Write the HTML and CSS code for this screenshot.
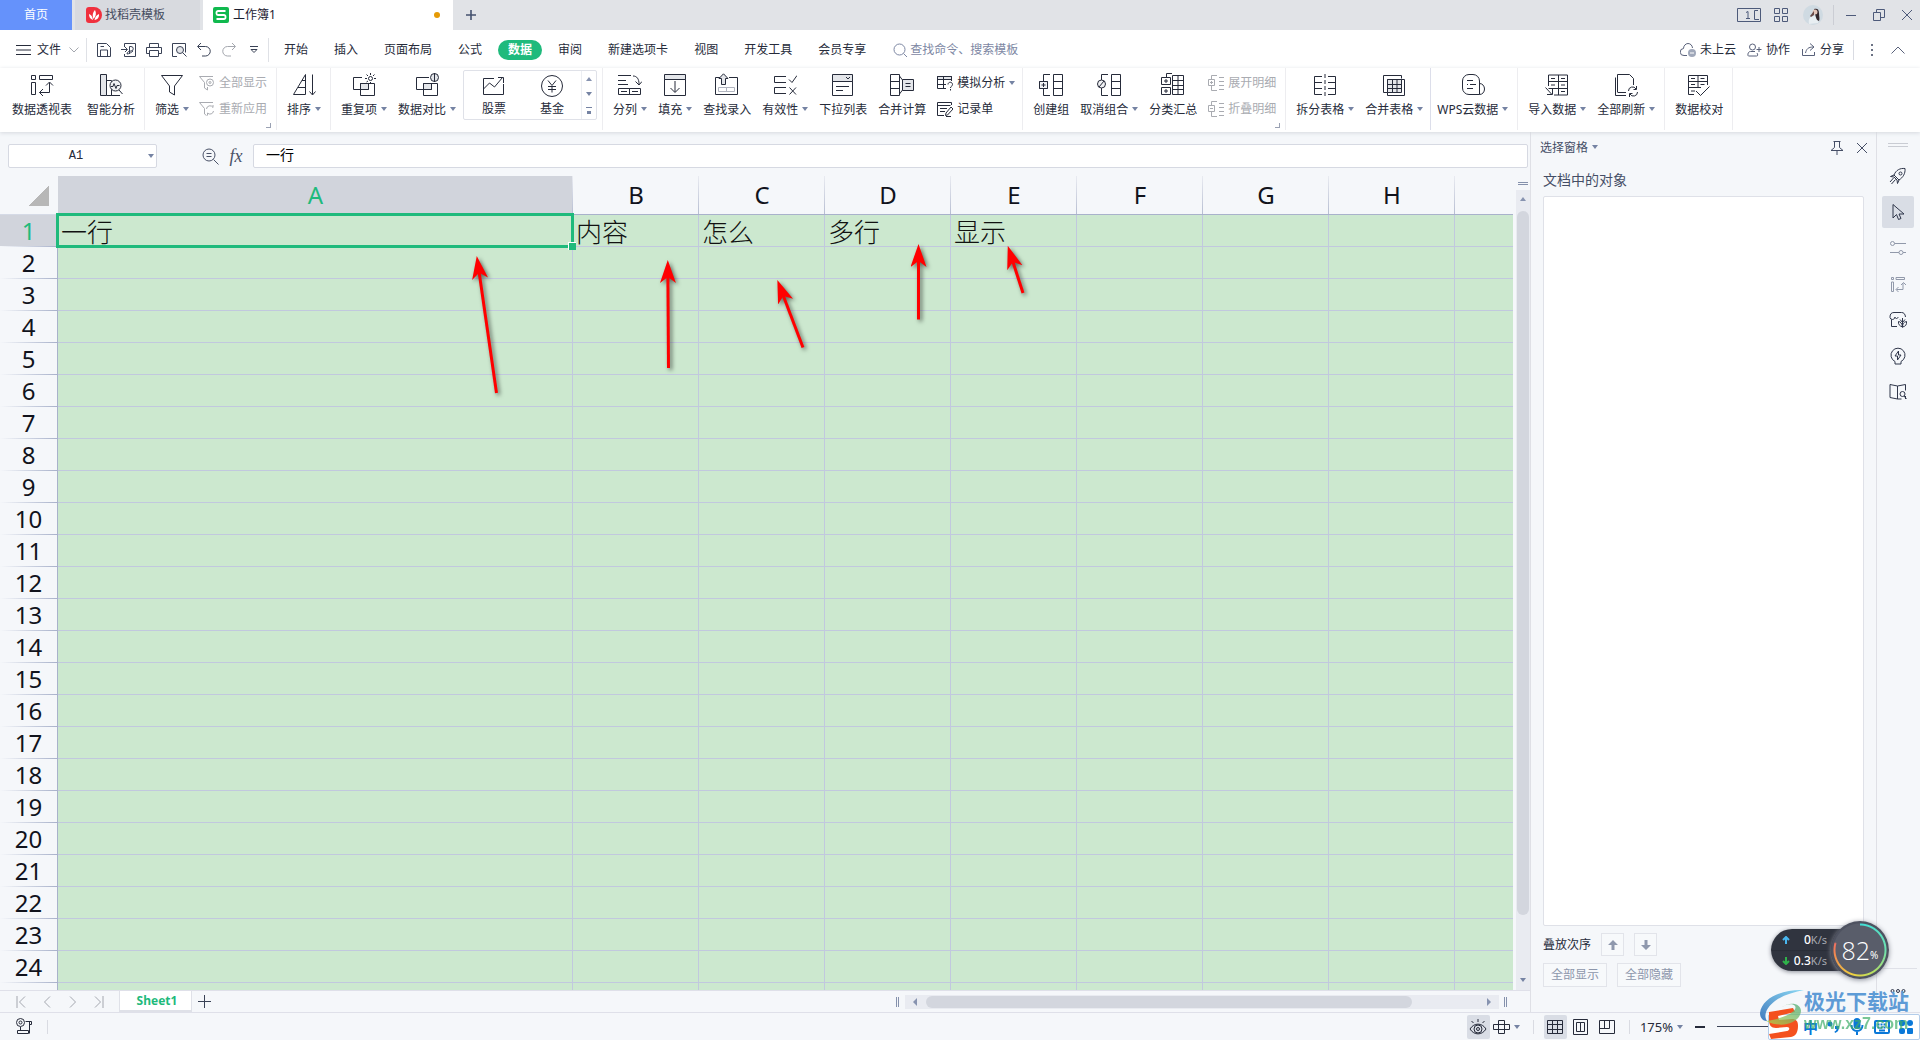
FILE: index.html
```html
<!DOCTYPE html>
<html lang="zh-CN">
<head>
<meta charset="utf-8">
<title>工作簿1</title>
<link rel="stylesheet" href="styles.css">
</head>
<body>
<header class="titlebar">
  <button class="tab tab-home">首页</button>
  <button class="tab tab-docer"><svg width="16" height="16" viewBox="0 0 16 16"><path d="M3 0h5a8 8 0 0 1 0 16H3a3 3 0 0 1-3-3V3a3 3 0 0 1 3-3z" fill="#f0303d"/><path d="M7 13C4 12 3 10 3 7c2 .6 3.400 2 4 6zM7.500 12C6 8 7 5 9 3c1.500 3 1.300 6-1.500 9zM8.500 13c.5-3 2-5 4.500-6 .3 3-1 5.500-4.500 6z" fill="#fff"/></svg>找稻壳模板</button>
  <button class="tab tab-active"><svg width="16" height="16" viewBox="0 0 16 16"><rect width="16" height="16" rx="2" fill="#10b94e"/><path d="M12.500 4H5a1.500 1.500 0 0 0-1.500 1.500v1A1.500 1.500 0 0 0 5 8h6a1.500 1.500 0 0 1 1.500 1.500v1A1.500 1.500 0 0 1 11 12H3.500" stroke="#fff" stroke-width="1.800" fill="none"/></svg>工作簿1<span class="dirty"></span></button>
  <button class="plain new-tab" aria-label="新建"><svg class="ic" width="12" height="12" viewBox="0 0 12 12"><path d="M6 1v10M1 6h10" stroke-width="1.600"/></svg></button>
  <div class="window-tools">
    <svg class="ic" width="24" height="16" viewBox="0 0 24 16"><path d="M.5 1.500h23v13H.5zM21 3.500h-3.500v9H22M9 5.500l2-1v7M9 11.500h4M19.500 12.500h1"/></svg>
    <svg class="ic" width="14" height="16" viewBox="0 0 14 16"><path d="M.5 1.500h5v5h-5zM8.500 1.500h5v5h-5zM.5 9.500h5v5h-5zM8.500 9.500h5v5h-5z"/></svg>
    <svg width="20" height="20" viewBox="0 0 20 20"><circle cx="10" cy="10" r="10" fill="#cfdae2"/><path d="M6 19c-1-5 1-8 5-8s5 3 4 7z" fill="#e8eef2"/><path d="M11 4c3-1 5 0 5 4 0 3 1 6 0 8-3-1-3-4-4-7z" fill="#33262c"/><circle cx="12" cy="7" r="2.500" fill="#e3c4b8"/><path d="M7 11l4-5 0 4-3 2z" fill="#6a4a48"/></svg>
    <i class="vline"></i>
    <button class="plain" aria-label="最小化"><svg class="ic" width="12" height="14" viewBox="0 0 12 14"><path d="M1 7.500h10"/></svg></button>
    <button class="plain" aria-label="还原"><svg class="ic" width="14" height="14" viewBox="0 0 14 14"><path d="M1.500 4.500h7v8h-7zM4.500 4.500v-3h8v8h-4"/></svg></button>
    <button class="plain" aria-label="关闭"><svg class="ic" width="12" height="12" viewBox="0 0 12 12"><path d="M1 1l10 10M11 1L1 11"/></svg></button>
  </div>
</header>

<nav class="menubar">
  <button class="plain file"><svg class="ic" width="15" height="12" viewBox="0 0 15 12"><path d="M0 1.500h15M0 6h15M0 10.500h15"/></svg>文件<svg class="ic faint" width="10" height="8" viewBox="0 0 10 8"><path d="M.5 1.500L5 6l4.500-4.500"/></svg></button>
  <div class="quick">
    <button class="plain" aria-label="保存"><svg class="ic" width="16" height="16" viewBox="0 0 16 16"><path d="M1.500 1.500h9l4 4v9h-13zM4.500 14v-6h7v6M4.500 4.500H8"/></svg></button>
    <button class="plain" aria-label="输出为PDF"><svg class="ic" width="16" height="16" viewBox="0 0 16 16"><path d="M3.500 5V1.500h11v13h-11V12M0 7.500h6M4 5l2.500 2.500L4 10M8.500 12V4.500h1.500a2 2 0 0 1 0 4.500c-2 0-4 1-4 3 2 0 5-2 6-3"/></svg></button>
    <button class="plain" aria-label="打印"><svg class="ic" width="16" height="16" viewBox="0 0 16 16"><path d="M3.500 5.500v-4h9v4M3.500 11.500h-3v-6h15v6h-3M3.500 8.500h9v6h-9z"/></svg></button>
    <button class="plain" aria-label="打印预览"><svg class="ic" width="16" height="16" viewBox="0 0 16 16"><path d="M6 14.500H1.500v-13h13v9"/><circle cx="9" cy="8" r="3.500" fill="#e4e6ea"/><path d="M11.500 10.500l4 4"/></svg></button>
    <button class="plain" aria-label="撤销"><svg class="ic" width="16" height="16" viewBox="0 0 16 16"><path d="M5 1L1.500 4.500 5 8M2 4.500h7.500a4.500 4.500 0 0 1 0 9.500H6"/></svg></button>
    <button class="plain faint" aria-label="恢复"><svg class="ic" width="16" height="16" viewBox="0 0 16 16"><path d="M11 1l3.500 3.500L11 8M14 4.500H6.500a4.500 4.500 0 0 0 0 9.500H10"/></svg></button>
    <button class="plain more" aria-label="更多"><svg class="ic" width="8" height="8" viewBox="0 0 8 8"><path d="M0 .5h8M1 3.500l3 3 3-3z"/></svg></button>
  </div>
  <div class="menus">
    <button class="plain">开始</button><button class="plain">插入</button><button class="plain">页面布局</button><button class="plain">公式</button><button class="plain current">数据</button><button class="plain">审阅</button><button class="plain">新建选项卡</button><button class="plain">视图</button><button class="plain">开发工具</button><button class="plain">会员专享</button>
  </div>
  <button class="plain search"><svg class="ic" width="15" height="15" viewBox="0 0 15 15"><circle cx="6.500" cy="6.500" r="5.500"/><path d="M10.500 10.500L14 14"/></svg>查找命令、搜索模板</button>
  <div class="account">
    <button class="plain"><svg class="ic" width="16" height="16" viewBox="0 0 16 16"><path d="M7 13.500H4a3.500 3.500 0 0 1-.5-7C3.500 4 5.500 1.500 8 1.500s4.300 2 4.500 4.500"/><circle cx="12" cy="11" r="4" fill="#a0a8ba" stroke="none"/><path d="M10 11h4" stroke="#fff"/></svg>未上云</button>
    <button class="plain"><svg class="ic" width="15" height="16" viewBox="0 0 15 16"><circle cx="5.500" cy="5" r="3"/><path d="M8 9.500H3.500c-3 0-3 4.500-2 4.500h8c2 0 1-2 .5-3M9.500 7.500h5M12 5v5"/></svg>协作</button>
    <button class="plain"><svg class="ic" width="15" height="16" viewBox="0 0 15 16"><path d="M1.500 7v6.500h12V10M9 1.500L13 5 9 8.500M12.500 5C7 5 5.500 7 4.500 11"/></svg>分享</button>
    <i class="vline"></i>
    <button class="plain" aria-label="选项"><svg width="4" height="14" viewBox="0 0 4 14"><path d="M1 1h2v2H1zM1 6h2v2H1zM1 11h2v2H1z" fill="#6b7284"/></svg></button>
    <button class="plain" aria-label="折叠功能区"><svg class="ic faint2" width="14" height="8" viewBox="0 0 14 8"><path d="M.5 7.500L7 1l6.500 6.500"/></svg></button>
  </div>
</nav>

<section class="ribbon">
  <div class="group wide">
    <button class="tool"><svg class="ic" width="24" height="24" viewBox="0 0 24 24"><path d="M1.500 2.500h4v4h-4zM9.500 2.500h13v4h-13zM1.500 9.500h4v12h-4zM9.500 19.500h10v-10M13 16l-3.500 3.500L13 23M16 12.500l3.500-3.500 3.500 3.500"/></svg><span>数据透视表</span></button>
    <button class="tool"><svg class="ic" width="24" height="24" viewBox="0 0 24 24"><path d="M1.500 1.500h6v21h-6z" fill="#e4e6ea"/><path d="M7.500 7.500h5v15h-5M12.500 19v3.500h4M13 22.500h8"/><circle cx="16.500" cy="12.500" r="5.500" fill="#f1f2f4"/><path d="M12 13.500h2l1-3 2 5 1-3h2.500M20 17l3.500 4"/></svg><span>智能分析</span></button>
  </div>
  <div class="group filter">
    <button class="tool"><svg class="ic" width="24" height="24" viewBox="0 0 24 24"><path d="M1.500 2.500h21L14.500 13v9l-5-3v-6z"/></svg><span class="dd">筛选</span></button>
    <div class="stack off">
      <button class="line"><svg class="ic" width="16" height="16" viewBox="0 0 16 16"><path d="M14 1.500H.5l5 6V13l3 2v-3"/><circle cx="11" cy="7.500" r="3.500"/><circle cx="11" cy="7.500" r="1"/></svg>全部显示</button>
      <button class="line"><svg class="ic" width="16" height="16" viewBox="0 0 16 16"><path d="M14 1.500H.5l5 6V13l2 1.500"/><path d="M7.500 8a3.500 3.500 0 0 1 6.500-1.500V4M14.500 10A3.500 3.500 0 0 1 8.500 12v2.500"/></svg>重新应用</button>
    </div>
    <i class="corner"></i>
  </div>
  <div class="group">
    <button class="tool"><svg class="ic" width="24" height="24" viewBox="0 0 24 24"><path d="M1.500 21.500L13.500 1.500v20zM10 7.500h3.500M6 14.500h7.500M20.500 1.500v20M17.500 18.500l3 3.500 3-3.500"/></svg><span class="dd">排序</span></button>
  </div>
  <div class="group near">
    <button class="tool"><svg class="ic" width="24" height="24" viewBox="0 0 24 24"><path d="M10 4.500H1.500v12h15V13"/><path d="M8.500 10.500h8v6h-8z" fill="#e4e6ea"/><path d="M8.500 10.500h14v12h-14z"/><circle cx="18.500" cy="5.500" r="2"/><path d="M18.500 0v2M18.500 9v2M13 5.500h2M22 5.500h2M14.500 1.500L16 3M22.500 1.500L21 3M14.500 9L16 8"/></svg><span class="dd">重复项</span></button>
    <button class="tool"><svg class="ic" width="24" height="24" viewBox="0 0 24 24"><path d="M14 4.500H1.500v12h15V14"/><path d="M8.500 10.500h8v6h-8z" fill="#e4e6ea"/><path d="M8.500 10.500h14v12h-14z"/><circle cx="19.500" cy="4.500" r="4" fill="#e4e6ea"/><path d="M19.500 0v9"/></svg><span class="dd">数据对比</span></button>
    <div class="gallery">
      <button class="tool"><svg class="ic" width="24" height="22" viewBox="0 0 24 22"><path d="M12 3.500H1.500v16h20V9M1.500 14l6-6 5 4 8-9.500M16 2.500h5.500V8"/></svg><span>股票</span></button>
      <button class="tool"><svg class="ic" width="24" height="22" viewBox="0 0 24 22"><circle cx="12" cy="11" r="10.500"/><path d="M8 5.500l4 5 4-5M8 11.500h8M8 14.500h8M12 11v6.500"/></svg><span>基金</span></button>
      <div class="scroller"><i class="tri up"></i><i class="tri"></i><i class="bar"></i></div>
    </div>
  </div>
  <div class="group calc">
    <button class="tool"><svg class="ic" width="24" height="24" viewBox="0 0 24 24"><path d="M0 2.500h13M0 7.500h8M0 11.500h10M15 3c4 0 6 3 6 8M17.500 8.500l3.500 3.500 3-3.500M.5 15.500h11v6H.5zM11.500 15.500h11v6h-11zM3 18.500h6M14 18.500h6"/></svg><span class="dd">分列</span></button>
    <button class="tool"><svg class="ic" width="24" height="24" viewBox="0 0 24 24"><path d="M1.500 1.500h21v5h-21z" fill="#e4e6ea"/><path d="M1.500 6.500h21v16h-21zM12 8v11M7.500 15l4.500 4.500 4.500-4.500"/></svg><span class="dd">填充</span></button>
    <button class="tool"><svg class="ic" width="24" height="24" viewBox="0 0 24 24"><path d="M5 4.500H.5v17h22v-17H14"/><path d="M3.500 14.500h16v4h-16zM11.500 14.500v4" stroke="#b0b4bf"/><path d="M8.500 0.800L13 5.500h-2.500v6h-4v-6H4z" fill="#e4e6ea"/></svg><span>查找录入</span></button>
    <button class="tool"><svg class="ic" width="24" height="24" viewBox="0 0 24 24"><path d="M13 3.500H1.500v6H13M13 14.500H1.500v6H13M16 6.500l3 3 5-7M16.500 14.500l6.500 7M23 14.500l-6.500 7"/></svg><span class="dd">有效性</span></button>
    <button class="tool"><svg class="ic" width="24" height="24" viewBox="0 0 24 24"><path d="M1.500 1.500h20v7h-20z" fill="#e4e6ea"/><path d="M1.500 8.500h20v14h-20zM15 4l2 2 2-2M5 13.500h13M5 17.500h7"/></svg><span>下拉列表</span></button>
    <button class="tool"><svg class="ic" width="24" height="24" viewBox="0 0 24 24"><path d="M.5 1.500h9v21h-9zM.5 8.500h9M.5 15.500h9M9.500 3l3 4M9.500 21l3-4"/><path d="M12.500 6.500h11v11h-11z" fill="#e4e6ea"/><path d="M15.500 10.500h5M15.500 13.500h5"/></svg><span>合并计算</span></button>
    <div class="stack">
      <button class="line dd"><svg class="ic" width="16" height="16" viewBox="0 0 16 16"><path d="M.5 1.500h14v3H.5z" fill="#e4e6ea"/><path d="M14.500 6V1.500H.5v12H9M.5 4.500h14M.5 9.500H9M6.500 1.500v12M11 9.500c0-3 4.500-3 4.500 0 0 2-2 1.500-2 3.500M13.500 14v1.500"/></svg>模拟分析</button>
      <button class="line"><svg class="ic" width="16" height="16" viewBox="0 0 16 16"><path d="M14.500 4V1.500H.5v13H7M.5 4.500h13M3 7.500h7M3 10.500h5M9 12l5-6 2 2-5.500 6-2 .5zM9 15.500h5"/></svg>记录单</button>
    </div>
  </div>
  <div class="group">
    <button class="tool"><svg class="ic" width="24" height="24" viewBox="0 0 24 24"><path d="M11 1.500H4.500v21H11M.5 8.500h8v7h-8z"/><path d="M.5 8.500h8v7h-8z" fill="#f1f2f4"/><path d="M2.500 12h4M4.500 10v4M14.500 1.500h9v21h-9zM14.500 8.500h9M14.500 15.500h9"/></svg><span>创建组</span></button>
    <button class="tool"><svg class="ic" width="24" height="24" viewBox="0 0 24 24"><path d="M11 1.500H4.500v21H11"/><circle cx="4.500" cy="11" r="4" fill="#f1f2f4"/><path d="M2 14l5-6M14.500 1.500h9v21h-9zM14.500 8.500h9M14.500 15.500h9"/></svg><span class="dd">取消组合</span></button>
    <button class="tool"><svg class="ic" width="24" height="24" viewBox="0 0 24 24"><path d="M11 .5H5.500V4M.5 4.500h9v7h-9zM.5 14.500h9v7h-9z"/><path d="M3 8h4M5 6v4M3 18h4M5 16v4M11.500 2.500h11v19h-11zM11.500 7.500h11M11.500 12.500h11M11.500 16.500h11M17 2.500v19"/></svg><span>分类汇总</span></button>
    <div class="stack off">
      <button class="line"><svg class="ic" width="16" height="16" viewBox="0 0 16 16"><path d="M9 .5H3.500V4M3.500 11v4.500H9M.5 4.500h6v6h-6zM2 7.500h3M3.500 6v3M11 2.500h5M11 6.500h5M11 10.500h5M11 14.500h5"/></svg>展开明细</button>
      <button class="line"><svg class="ic" width="16" height="16" viewBox="0 0 16 16"><path d="M9 .5H3.500V4M3.500 11v4.500H9M.5 4.500h6v6h-6zM2 7.500h3M11 2.500h5M11 6.500h5M11 10.500h5M11 14.500h5"/></svg>折叠明细</button>
    </div>
    <i class="corner"></i>
  </div>
  <div class="group end7">
    <button class="tool"><svg class="ic" width="24" height="24" viewBox="0 0 24 24"><path d="M9 3.500H1.500v18H9M1.500 9.500H9M1.500 15.500H9M15 3.500h7.500v18H15M22.500 9.500H15M22.500 15.500H15"/><path d="M12 1v22" stroke-dasharray="4 2"/></svg><span class="dd">拆分表格</span></button>
    <button class="tool"><svg class="ic" width="24" height="24" viewBox="0 0 24 24"><path d="M5.500 19.500h-4v-17h18v3"/><path d="M5.500 6.500h17v16h-17z"/><path d="M5.500 6.500h14v13h-14z" fill="#e4e6ea"/><path d="M5.500 11.500h14M5.500 15.500h14M10.500 6.500v13M15 6.500v13"/></svg><span class="dd">合并表格</span></button>
  </div>
  <div class="group cloud">
    <button class="tool"><svg class="ic" width="24" height="24" viewBox="0 0 24 24"><path d="M18.500 21.500H8a6.500 6.500 0 0 1-6.500-6.500V8a6.500 6.500 0 0 1 6.500-6.500h4A6.500 6.500 0 0 1 18.500 8zM18.500 10.500c3 0 5 2.500 5 5.500s-2 5.500-5 5.500M6 7.500h6M6 11.500h1M9 11.500h6M6 15.500h6"/></svg><span class="dd">WPS云数据</span></button>
  </div>
  <div class="group">
    <button class="tool"><svg class="ic" width="24" height="24" viewBox="0 0 24 24"><path d="M3.500 13v-11h19v20H9M3.500 8.500h19M3.500 15.500h19M13.500 2v20M6 5.500h4M16 5.500h4M6 12h4M16 12h4M16 18.500h4M0.500 14.500l6 6.500M7.500 16v5.500H2"/></svg><span class="dd">导入数据</span></button>
    <button class="tool"><svg class="ic" width="24" height="24" viewBox="0 0 24 24"><path d="M12 22.500H1.500v-18M3.500 19V1.500h12l4 4V12M12 19.500H3.500"/><path d="M14.500 18a4 4 0 0 1 7.500-2M22.500 13v3.500h-3M23.500 19a4 4 0 0 1-7.500 2M15.500 24v-3.500h3"/></svg><span class="dd">全部刷新</span></button>
  </div>
  <div class="group">
    <button class="tool"><svg class="ic" width="24" height="24" viewBox="0 0 24 24"><path d="M7 21.500H1.500v-19h19V12M1.500 8.500h19M1.500 14.500H14M11 2.500V15M4 5.500h4M13.500 5.500h4M4 11.500h4M13.500 11.500h4M4 18h4M9 18l4.500 4.500 9-9"/></svg><span>数据校对</span></button>
  </div>
</section>

<main class="workspace">
  <section class="book">
    <div class="formula">
      <div class="namebox"><input type="text" value="A1" aria-label="名称框"><i class="tri"></i></div>
      <svg class="ic" width="17" height="17" viewBox="0 0 17 17"><circle cx="7" cy="7" r="6"/><path d="M4.500 5.500h5M4.500 8.500h5M11.500 11.500l5 5"/></svg>
      <span class="fx">fx</span>
      <input class="fxinput" type="text" value="一行" aria-label="编辑栏">
    </div>
    <div class="gridrow">
      <div class="grid">
        <table>
          <colgroup><col class="c-head"><col class="c-a"><col class="c-n"><col class="c-n"><col class="c-n"><col class="c-n"><col class="c-n"><col class="c-n"><col class="c-n"><col></colgroup>
          <thead><tr><th class="all"></th><th class="sel">A</th><th>B</th><th>C</th><th>D</th><th>E</th><th>F</th><th>G</th><th>H</th><th class="cut"></th></tr></thead>
          <tbody>
            <tr><th class="sel">1</th><td class="active">一行</td><td>内容</td><td>怎么</td><td>多行</td><td>显示</td><td></td><td></td><td></td><td></td></tr>
            <tr><th>2</th><td></td><td></td><td></td><td></td><td></td><td></td><td></td><td></td><td></td></tr>
            <tr><th>3</th><td></td><td></td><td></td><td></td><td></td><td></td><td></td><td></td><td></td></tr>
            <tr><th>4</th><td></td><td></td><td></td><td></td><td></td><td></td><td></td><td></td><td></td></tr>
            <tr><th>5</th><td></td><td></td><td></td><td></td><td></td><td></td><td></td><td></td><td></td></tr>
            <tr><th>6</th><td></td><td></td><td></td><td></td><td></td><td></td><td></td><td></td><td></td></tr>
            <tr><th>7</th><td></td><td></td><td></td><td></td><td></td><td></td><td></td><td></td><td></td></tr>
            <tr><th>8</th><td></td><td></td><td></td><td></td><td></td><td></td><td></td><td></td><td></td></tr>
            <tr><th>9</th><td></td><td></td><td></td><td></td><td></td><td></td><td></td><td></td><td></td></tr>
            <tr><th>10</th><td></td><td></td><td></td><td></td><td></td><td></td><td></td><td></td><td></td></tr>
            <tr><th>11</th><td></td><td></td><td></td><td></td><td></td><td></td><td></td><td></td><td></td></tr>
            <tr><th>12</th><td></td><td></td><td></td><td></td><td></td><td></td><td></td><td></td><td></td></tr>
            <tr><th>13</th><td></td><td></td><td></td><td></td><td></td><td></td><td></td><td></td><td></td></tr>
            <tr><th>14</th><td></td><td></td><td></td><td></td><td></td><td></td><td></td><td></td><td></td></tr>
            <tr><th>15</th><td></td><td></td><td></td><td></td><td></td><td></td><td></td><td></td><td></td></tr>
            <tr><th>16</th><td></td><td></td><td></td><td></td><td></td><td></td><td></td><td></td><td></td></tr>
            <tr><th>17</th><td></td><td></td><td></td><td></td><td></td><td></td><td></td><td></td><td></td></tr>
            <tr><th>18</th><td></td><td></td><td></td><td></td><td></td><td></td><td></td><td></td><td></td></tr>
            <tr><th>19</th><td></td><td></td><td></td><td></td><td></td><td></td><td></td><td></td><td></td></tr>
            <tr><th>20</th><td></td><td></td><td></td><td></td><td></td><td></td><td></td><td></td><td></td></tr>
            <tr><th>21</th><td></td><td></td><td></td><td></td><td></td><td></td><td></td><td></td><td></td></tr>
            <tr><th>22</th><td></td><td></td><td></td><td></td><td></td><td></td><td></td><td></td><td></td></tr>
            <tr><th>23</th><td></td><td></td><td></td><td></td><td></td><td></td><td></td><td></td><td></td></tr>
            <tr><th>24</th><td></td><td></td><td></td><td></td><td></td><td></td><td></td><td></td><td></td></tr>
            <tr><th></th><td></td><td></td><td></td><td></td><td></td><td></td><td></td><td></td><td></td></tr>
          </tbody>
        </table>
        <svg class="arrows" width="1100" height="300" viewBox="0 176 1100 300">
          <defs><marker id="head" markerUnits="userSpaceOnUse" markerWidth="24" markerHeight="18" refX="6" refY="8" orient="auto"><path d="M0 0L23 8 0 16 6 8z" fill="#f00"/></marker></defs>
          <g stroke="#f00" stroke-width="3">
            <path d="M496.500 393L479.200 272.800" marker-end="url(#head)"/>
            <path d="M668.500 368L667.900 277" marker-end="url(#head)"/>
            <path d="M803 347.500L783.400 296" marker-end="url(#head)"/>
            <path d="M918.500 319.500V261" marker-end="url(#head)"/>
            <path d="M1023 293L1013 262" marker-end="url(#head)"/>
          </g>
        </svg>
      </div>
      <div class="vscroll"><i class="split"></i><div class="track"><i class="tri up"></i><div class="thumb"></div><i class="tri"></i></div></div>
    </div>
    <div class="sheets">
      <div class="steps">
        <button class="plain" aria-label="首个"><svg class="ic" width="10" height="12" viewBox="0 0 10 12"><path d="M1 0v12M9 .5L3.500 6 9 11.500"/></svg></button>
        <button class="plain" aria-label="上一个"><svg class="ic" width="10" height="12" viewBox="0 0 10 12"><path d="M8 .5L2.500 6 8 11.500"/></svg></button>
        <button class="plain" aria-label="下一个"><svg class="ic" width="10" height="12" viewBox="0 0 10 12"><path d="M2 .5L7.500 6 2 11.500"/></svg></button>
        <button class="plain" aria-label="末个"><svg class="ic" width="10" height="12" viewBox="0 0 10 12"><path d="M9 0v12M1 .5L6.500 6 1 11.500"/></svg></button>
      </div>
      <button class="sheet">Sheet1</button>
      <button class="plain add" aria-label="新建工作表"><svg class="ic" width="13" height="13" viewBox="0 0 13 13"><path d="M6.500 0v13M0 6.500h13"/></svg></button>
      <i class="grip"></i>
      <div class="htrack"><i class="tri left"></i><div class="hthumb"></div><i class="tri right"></i></div>
      <i class="grip"></i>
    </div>
  </section>

  <aside class="pane">
    <header><span class="dd">选择窗格</span><button class="plain" aria-label="固定"><svg class="ic" width="14" height="14" viewBox="0 0 14 14"><path d="M3.500 .5h7M4.500 .5v6L1 9.500h12L9.500 6.500v-6M7 9.500V14"/></svg></button><button class="plain" aria-label="关闭窗格"><svg class="ic" width="12" height="12" viewBox="0 0 12 12"><path d="M1 1l10 10M11 1L1 11"/></svg></button></header>
    <h2>文档中的对象</h2>
    <div class="list"></div>
    <div class="order"><span>叠放次序</span>
      <button aria-label="上移"><svg width="10" height="10" viewBox="0 0 10 10"><path d="M5 0l5 5H6.500v5h-3V5H0z" fill="#8f98ad"/></svg></button>
      <button aria-label="下移"><svg width="10" height="10" viewBox="0 0 10 10"><path d="M5 10l5-5H6.500V0h-3v5H0z" fill="#8f98ad"/></svg></button></div>
    <div class="vis"><button>全部显示</button><button>全部隐藏</button></div>
  </aside>

  <nav class="side">
    <i class="grab"></i>
    <button class="plain" aria-label="助手"><svg class="ic" width="18" height="18" viewBox="0 0 18 18"><path d="M5 8c2-5 6-7 11-6.500C16.500 6.500 14 10.500 10 13zM5 8L1.500 9.500 5 10M10 13l-1.500 3.500L8 13M4.500 11L1 15M6.500 12.500L2.500 17M5 10l3 3"/><circle cx="11.500" cy="6.500" r="1.500"/></svg></button>
    <button class="plain on" aria-label="选择"><svg class="ic" width="18" height="18" viewBox="0 0 18 18"><path d="M4 1.500v13.500l3.500-3.500L9.500 16.500l2.500-1-2-4.500h5z"/></svg></button>
    <button class="plain dim" aria-label="属性"><svg class="ic" width="18" height="18" viewBox="0 0 18 18"><circle cx="3.500" cy="4.500" r="2"/><path d="M5.500 4.500H17M1 13.500h9M14 13.500h3"/><circle cx="12" cy="13.500" r="2"/></svg></button>
    <button class="plain dim" aria-label="透视表"><svg class="ic" width="18" height="18" viewBox="0 0 18 18"><path d="M2.500 2.500h2v2h-2zM7 2.500h8.500v2H7zM2.500 7h2v9.500h-2zM7.500 14.500h6.500V8M9.500 12L7 14.500 9.500 17M12 10l2.500-2.500L17 10"/></svg></button>
    <button class="plain" aria-label="素材"><svg class="ic" width="18" height="18" viewBox="0 0 18 18"><path d="M3.500 8.500a2.500 2.500 0 0 1-2.500-2V6q0-4.500 4-4.500h7.500Q16 1.500 16.500 6M3.500 8.500c1 0 2.500-1 2.500-2.500 0 2 3 2 3 0M2.500 8.500v7H8"/><path d="M13.500 7v9.500M13.500 16c-3-1-4.500-3-4-5.500 2 0 3.500 2 4 5.500 0-3 1-5 4-5.500.5 3-1 5-4 5.500zM11 8.500l2.500 3 2.500-3"/></svg></button>
    <button class="plain" aria-label="灵感"><svg class="ic" width="18" height="18" viewBox="0 0 18 18"><path d="M6 14.500A7 7 0 1 1 12 14.500v2.500H6zM9.500 4L6 9h2.500v4L12 8H9.500z"/></svg></button>
    <button class="plain" aria-label="查阅"><svg class="ic" width="18" height="18" viewBox="0 0 18 18"><path d="M8.500 3L1 1.500v13l7.500 1.500zM8.500 3l8-1.500v6M8.500 16h4M16.500 13v3"/><circle cx="13.500" cy="11" r="2.500"/><path d="M15 13l2.500 3"/></svg></button>
    <button class="plain dots" aria-label="更多工具"><svg class="ic" width="16" height="6" viewBox="0 0 16 6"><circle cx="2.500" cy="3" r="1.500"/><circle cx="8" cy="3" r="1.500"/><circle cx="13.500" cy="3" r="1.500"/></svg></button>
  </nav>
</main>

<footer class="status">
  <button class="plain macro" aria-label="宏"><svg class="ic" width="17" height="17" viewBox="0 0 17 17"><circle cx="4.500" cy="4.500" r="4"/><circle cx="4.500" cy="4.500" r="1.500"/><path d="M9.500 3.500h6v3h-2.500M13.500 3.500v12M4.500 9v3M1.500 12.500h11v3h-11z"/></svg></button>
  <i class="vline"></i>
  <button class="plain view on first" aria-label="护眼模式"><svg class="ic" width="18" height="18" viewBox="0 0 18 18"><path d="M1 11c4-6.500 12-6.500 16 0-4 6.500-12 6.500-16 0zM9 1v3M2.500 3l2 2M15.500 3l-2 2"/><circle cx="9" cy="11" r="4"/><circle cx="9" cy="11" r="1.500"/></svg></button>
  <button class="plain cross dd" aria-label="阅读模式"><svg class="ic" width="17" height="16" viewBox="0 0 17 16"><path d="M5.500 1.500h6v13h-6zM.5 5.500h16v5H.5z"/></svg></button>
  <i class="vline"></i>
  <button class="plain view on" aria-label="普通视图"><svg class="ic" width="18" height="16" viewBox="0 0 18 16"><path d="M1.500 1.500h15v13h-15zM1.500 5.500h15M1.500 10.500h15M6.500 1.500v13M11.500 1.500v13"/></svg></button>
  <button class="plain view" aria-label="页面布局"><svg class="ic" width="16" height="16" viewBox="0 0 16 16"><path d="M.5 .5h14v15H.5zM3.500 3.500h4v9h-4zM7.500 3.500h4v9h-4z"/></svg></button>
  <button class="plain view" aria-label="分页预览"><svg class="ic" width="18" height="16" viewBox="0 0 18 16"><path d="M1.500 1.500h15v13h-15zM6.500 1.500v8M11.500 1.500v8M1.500 9.500h10"/></svg></button>
  <i class="vline"></i>
  <button class="plain zoom dd">175%</button>
  <button class="plain minus" aria-label="缩小"><svg class="ic" width="10" height="10" viewBox="0 0 10 10"><path d="M0 5h10" stroke-width="2"/></svg></button>
  <div class="slider"></div>
</footer>

<div class="ime">
  <b>中</b>
  <svg width="14" height="16" viewBox="0 0 14 16" fill="#0a78d8"><circle cx="3" cy="5" r="2.500"/><path d="M8 7h4c0 4-1 6-4 7l-.5-1.500C9 12 9.500 11 9.500 10H8z"/></svg>
  <svg width="14" height="18" viewBox="0 0 14 18" fill="none" stroke="#0a78d8" stroke-width="2"><rect x="4.500" y="1" width="5" height="9" rx="2.500" fill="#0a78d8"/><path d="M1.500 7c0 8 11 8 11 0M7 13v4"/></svg>
  <svg width="16" height="14" viewBox="0 0 16 14" fill="none" stroke="#0a78d8" stroke-width="2"><rect x="1" y="1" width="14" height="12" rx="1"/><path d="M3.500 4.500h9M3.500 7.500h9" stroke-dasharray="2 1"/><path d="M5 10.500h6"/></svg>
  <svg width="14" height="14" viewBox="0 0 14 14" fill="#0a78d8"><rect width="6" height="6" rx="2"/><circle cx="11" cy="3" r="3"/><rect y="8" width="6" height="6" rx="2"/><rect x="8" y="8" width="6" height="6" rx="1"/></svg>
</div>
<div class="mark">
  <svg width="44" height="50" viewBox="0 0 44 50">
    <defs><linearGradient id="sw" x1="0" y1="1" x2="1" y2="0"><stop offset="0" stop-color="#2f6fb8"/><stop offset="1" stop-color="#7fd4f2"/></linearGradient><linearGradient id="sg" x1="0" y1="1" x2="1" y2="0"><stop offset="0" stop-color="#b8d44a"/><stop offset="1" stop-color="#4aa978"/></linearGradient></defs>
    <path d="M9 23l24-4 2 4-17 4 1 4 13-1c4 0 6 2 6 7 0 6-2 10-7 11l-20 2-2-5 18-3c3-1 3-4 0-4l-11 1c-5 0-7-3-7-8z" fill="#f4511e"/>
    <path d="M44 1C24 0 2 8 0 24c0 6 4 8 7 8-4-6 0-14 8-20C23 6 34 3 44 1z" fill="url(#sw)" opacity=".9"/>
    <path d="M21 19c4-4 12-5 14-2 3 4-8 12-29 15 16 8 34 2 35-10 0-8-12-10-20-3z" fill="url(#sg)" opacity=".75"/>
  </svg>
  <p><strong>极光下载站</strong><em>www.xz7.com</em></p>
</div>
<div class="meter">
  <div class="rates">
    <p><svg width="8" height="8" viewBox="0 0 8 8"><path d="M4 1v7M1 4l3-3 3 3" stroke="#49b7f0" stroke-width="2" fill="none"/></svg><b>0</b><small>K/s</small></p>
    <p><svg width="8" height="8" viewBox="0 0 8 8"><path d="M4 0v7M1 4l3 3 3-3" stroke="#2fb24a" stroke-width="2" fill="none"/></svg><b>0.3</b><small>K/s</small></p>
  </div>
  <div class="dial"><span>82</span><small>%</small></div>
</div>
</body>
</html>
```
FILE: styles.css
```css
* { box-sizing: border-box; }
body {
  margin: 0; height: 100vh; position: relative; overflow: hidden;
  display: flex; flex-direction: column;
  background: #f5f7fa; color: #262b3a;
  font: 12px/16px "Noto Sans", "Noto Sans CJK SC", sans-serif;
}
button, input { font: inherit; color: inherit; margin: 0; }
button { padding: 0; white-space: nowrap; }
svg { display: block; flex: none; }
i { flex: none; }
p { margin: 0; }
.ic { fill: none; stroke: currentColor; stroke-width: 1; }
.plain { border: 0; background: none; display: flex; align-items: center; justify-content: center; flex: none; }
.vline { width: 1px; height: 20px; background: #d9dbe2; }

.tri { width: 0; height: 0; border: 3px solid transparent; border-top: 4px solid #7583a3; border-bottom: 0; }
.tri.up { border-top: 0; border-bottom: 4px solid #8793b0; }
.tri.left { border: 4px solid transparent; border-right-color: #8793b0; border-left: 0; }
.tri.right { border: 4px solid transparent; border-left-color: #8793b0; border-right: 0; }
.dd::after {
  content: ""; display: inline-block; flex: none; margin-left: 4px; vertical-align: 3px;
  border: 3px solid transparent; border-top: 4px solid #7583a3; border-bottom: 0;
}

/* title bar */
.titlebar { display: flex; height: 30px; background: #e1e3e7; flex: none; }
.tab { border: 0; display: flex; align-items: center; gap: 4px; text-align: left; }
.tab-home { width: 72px; justify-content: center; background: #6592fb; color: #fff; }
.tab-docer { width: 125px; margin: 0 3px; padding-left: 11px; gap: 3px; background: #d8dadf; color: #454c60; }
.tab-active { width: 250px; padding: 0 13px 0 10px; background: #fff; color: #1c2030; }
.dirty { width: 6px; height: 6px; border-radius: 50%; background: #e59a05; margin-left: auto; }
.new-tab { width: 36px; color: #44516f; }
.window-tools { margin-left: auto; display: flex; align-items: center; gap: 13px; padding-right: 5px; color: #4d5a7a; }
.window-tools svg:nth-child(2) { margin-right: 2px; }
.window-tools .vline { background: #cbcdd4; margin: 0 -2px 0 -3px; }
.window-tools button { margin-right: 2px; }

/* menu bar */
.menubar { display: flex; align-items: center; height: 38px; padding-top: 2px; background: #fff; flex: none; }
.file { gap: 6px; padding: 0 7px 0 16px; height: 24px; border-right: 1px solid #dfe1e6; }
.file svg:last-child { margin-left: 2px; }
.faint { color: #a4a7ae; }
.faint2 { color: #7b8294; }
.quick { display: flex; align-items: center; gap: 9px; padding: 0 6px 0 9px; height: 24px; border-right: 1px solid #dfe1e6; color: #3a4256; }
.more { width: 16px; }
.menus { display: flex; gap: 2px; padding-left: 3px; }
.menus button { height: 20px; padding: 0 12px; }
.menus .current { background: #1fba7c; color: #fff; font-weight: bold; border-radius: 10px; padding: 0 10px; margin: 0 2px; }
.search { margin-left: 15px; gap: 2px; color: #7d87a3; }
.account { margin-left: auto; display: flex; align-items: center; gap: 11px; padding-right: 15px; }
.account button { gap: 4px; }
.account .ic { color: #59617a; }
.account .vline { margin: 0 5px 0 -2px; }
.account button:last-child { margin-left: 6px; }

/* ribbon */
.ribbon { display: flex; height: 64px; background: #fff; flex: none; box-shadow: 0 1px 4px #d5d8de; z-index: 1; }
.group { position: relative; display: flex; gap: 11px; height: 62px; padding: 0 9px 0 10px; border-right: 1px solid #ededf0; flex: none; }
.group.wide { padding-left: 12px; gap: 15px; }
.group.filter { gap: 10px; }
.group.near { padding-right: 5px; }
.group.calc { padding-right: 7px; }
.group.end7 { padding-right: 7px; border-color: #dcdeea; }
.group.cloud { padding: 0 9px 0 6px; }
.tool { border: 0; background: none; display: flex; flex-direction: column; align-items: center; gap: 5px; padding-top: 5px; height: 60px; }
.tool span { line-height: 16px; }
.stack { display: flex; flex-direction: column; gap: 10px; padding-top: 7px; }
.line { border: 0; background: none; display: flex; align-items: center; gap: 4px; height: 16px; }
.line.dd::after { margin-left: 0; }
.off { color: #a9abb1; }
.corner { position: absolute; right: 5px; bottom: 2px; width: 5px; height: 5px; border: 1px solid #9aa1b3; border-width: 0 1px 1px 0; }
.gallery { display: flex; gap: 26px; width: 134px; height: 50px; margin: 2px 0 0 -4px; padding-left: 17px; border: 1px solid #dfe1e8; border-radius: 2px; }
.gallery .tool { padding-top: 4px; height: 48px; gap: 4px; width: 26px; }
.gallery .tool + .tool { margin-left: 6px; }
.scroller { width: 15px; margin-left: -10px; display: flex; flex-direction: column; align-items: center; justify-content: space-around; border-left: 1px solid #eceef2; }
.scroller .bar { width: 6px; height: 7px; border-top: 1px solid #7583a3; background: linear-gradient(#7583a3, #7583a3) 50% 100% / 4px 3px no-repeat; }

/* workspace */
.workspace { flex: 1; min-height: 0; display: flex; }
.book { flex: 1; min-width: 0; display: flex; flex-direction: column; }
.formula { display: flex; align-items: center; height: 44px; padding: 4px 2px 0 8px; flex: none; color: #4a5268; }
.namebox { display: flex; align-items: center; width: 149px; height: 24px; padding-right: 2px; margin-right: 45px; background: #fff; border: 1px solid #d6d9e2; border-radius: 2px; }
.namebox input { flex: 1; min-width: 0; padding: 0 5px 0 0; border: 0; background: none; text-align: center; color: #262b3a; font-family: "Liberation Mono", monospace; }
.fx { width: 34px; text-align: center; font: italic 18px/20px "Liberation Serif", serif; }
.fxinput { flex: 1; min-width: 0; height: 24px; padding: 0 12px 4px; background: #fff; border: 1px solid #d6d9e2; border-radius: 2px; color: #000; font-size: 14px; }
.gridrow { flex: 1; min-height: 0; display: flex; }
.grid { flex: 1; min-width: 0; position: relative; overflow: hidden; }
table { table-layout: fixed; width: 100%; border-collapse: separate; border-spacing: 0; }
.c-head { width: 58px; }
.c-a { width: 515px; }
.c-n { width: 126px; }
th, td { padding: 0; height: 32px; }
th { font: 24px/28px "Noto Sans", sans-serif; color: #11131c; text-align: center; background: #f5f7fa; }
thead th { height: 39px; border-bottom: 1px solid #a9b2cb; background: linear-gradient(#e9ebf1, #b7bed2) right / 1px 100% no-repeat #f5f7fa; }
tbody th { border-right: 1px solid #a9b2cb; background: linear-gradient(90deg, #f5f7fa, #a9b2cb) bottom / 100% 1px no-repeat #f5f7fa; }
th.sel { background-color: #d1d4dc; color: #1fba7c; }
th.all { background: linear-gradient(135deg, transparent 50%, #b7b7b7 50%) 29px 10px / 20px 20px no-repeat #f5f7fa; border-bottom-color: #d5dae6; }
th.cut { background: #f5f7fa; }
td { background: #cce8cf; border: 1px solid #c1c8de; border-width: 0 1px 1px 0; padding: 0 3px; color: #111; font: 300 26px/28px "Noto Sans CJK SC", sans-serif; white-space: nowrap; }
td:last-child { border-right: 0; }
.active { position: relative; }
.active::after { content: ""; position: absolute; inset: -2px; border: 3px solid #1fba7c; }
.active::before { content: ""; position: absolute; z-index: 1; right: -4px; bottom: -4px; width: 7px; height: 7px; background: #1fba7c; border: 1px solid #fff; border-width: 1px 0 0 1px; }
.arrows { position: absolute; left: 0; top: 0; pointer-events: none; filter: drop-shadow(2px 2px 2px rgba(0, 0, 0, .55)); }
.vscroll { width: 17px; padding-left: 3px; display: flex; flex-direction: column; background: #f5f7fa; }
.split { height: 14px; margin: 0 2px; background: linear-gradient(#8591ac, #8591ac) 0 6px / 100% 1px no-repeat, linear-gradient(#8591ac, #8591ac) 0 8px / 100% 1px no-repeat; }
.track { flex: 1; display: flex; flex-direction: column; align-items: center; padding: 7px 0 8px; background: #e9ebf1; }
.thumb { width: 12px; flex: 1; margin: 10px 0 63px; border-radius: 6px; background: #d3d6de; }

.sheets { display: flex; align-items: center; height: 22px; padding-right: 23px; border-top: 1px solid #dfe0e9; flex: none; }
.steps { display: flex; gap: 16px; width: 119px; padding-left: 16px; color: #a3a6ae; }
.sheet { width: 73px; height: 21px; padding-left: 3px; border: 1px solid #dfe1e8; border-width: 0 1px 2px; background: #fff; color: #1fba7c; font-weight: bold; }
.add { width: 25px; color: #3a4256; }
.grip { width: 3px; height: 10px; border: 1px solid #8591ac; border-width: 0 1px; }
.add + .grip { margin-left: auto; }
.htrack { display: flex; align-items: center; width: 594px; height: 14px; margin: 0 5px 0 6px; padding: 0 8px; background: #e9ebf1; }
.hthumb { flex: 1; height: 12px; margin: 0 75px 0 9px; border-radius: 6px; background: #d3d6de; }

/* selection pane */
.pane { width: 347px; padding: 6px 12px 0; border: 1px solid #dfe0e6; border-width: 0 1px; color: #454e66; display: flex; flex-direction: column; }
.pane header { display: flex; align-items: center; gap: 12px; height: 19px; margin: 0 -4px 0 -3px; }
.pane header span { margin-right: auto; }
.pane h2 { margin: 14px 0 7px; font-size: 14px; line-height: 18px; font-weight: normal; }
.list { flex: 1; min-height: 0; background: #fff; border: 1px solid #dfe1e8; border-radius: 2px; }
.order { display: flex; gap: 10px; align-items: center; margin-top: 7px; color: #262b3a; }
.order button { width: 23px; height: 23px; display: flex; align-items: center; justify-content: center; }
.pane .order button, .vis button { border: 1px solid #e2e4ea; background: #f7f9fb; }
.vis { display: flex; gap: 10px; margin: 7px 0 25px; color: #8d96ab; }
.vis button { width: 64px; height: 24px; }

/* tool strip */
.side { width: 43px; display: flex; flex-direction: column; align-items: center; gap: 4px; padding-right: 1px; color: #2f364a; }
.side button { width: 32px; height: 32px; }
.side .on { background: #d9dde5; border-radius: 2px; }
.side .dim { color: #9199aa; }
.grab { width: 20px; height: 4px; margin: 11px 0 9px; border: 1px solid #c9ccd3; border-width: 1px 0; }
.side .dots { width: 38px; height: 44px; margin-top: auto; border-top: 1px solid #dfe1e8; }

/* status bar */
.status { display: flex; align-items: center; height: 28px; border-top: 1px solid #dfe0e9; color: #262b3a; flex: none; }
.status .vline { height: 14px; }
.macro { padding: 0 14px 0 16px; }
.view { width: 23px; height: 24px; margin-right: 3px; border-radius: 2px; }
.view.on { background: #d9dde5; }
.first { margin-left: auto; }
.cross { margin-right: 13px; }
.cross + .vline { margin-right: 10px; }
.view + .vline { margin: 0 10px 0 7px; }
.status > .first { margin-left: auto; }
.zoom { font-size: 13px; margin-right: 12px; }
.minus { margin-right: 12px; }
.slider { width: 203px; height: 1px; background: #3a4256; }

/* floating items */
.ime { position: absolute; right: 0; bottom: 0; width: 152px; height: 26px; padding: 0 6px 0 34px; display: flex; align-items: center; justify-content: space-between; background: #fff; border: 1px solid #b3cdea; border-radius: 2px; color: #0a78d8; }
.ime b { font-size: 15px; }
.mark { position: absolute; right: 11px; bottom: 1px; display: flex; }
.mark p { display: flex; flex-direction: column; }
.mark strong { font-size: 21px; line-height: 24px; color: #5e9bd6; }
.mark em { font: bold 16px/22px "Liberation Sans", sans-serif; color: #3fae6a; opacity: .7; }
.meter { position: absolute; right: 31px; bottom: 61px; display: flex; align-items: center; width: 118px; height: 58px; }
.rates { width: 80px; height: 42px; padding: 0 0 0 11px; border-radius: 21px 0 0 21px; background: linear-gradient(#30343f 50%, #272b35 50%, #30343f 54%); color: #fff; box-shadow: 0 1px 4px #8b8e98; }
.rates p { display: flex; align-items: center; justify-content: flex-end; height: 21px; padding-right: 24px; }
.rates svg { margin-right: auto; }
.rates b { font: 500 12px/16px "Noto Sans", sans-serif; }
.rates small { font-size: 11px; color: #a5a8b0; }
.dial { position: absolute; right: 0; top: 0; width: 58px; height: 58px; border-radius: 50%; display: flex; align-items: center; justify-content: center; color: #fff; box-shadow: 0 1px 5px #8b8e98; background: radial-gradient(circle, #595d6a 24px, transparent 25px), radial-gradient(circle, transparent 26px, #4e5260 27px), conic-gradient(#3fe0d8, #6fe0b0 25%, #b8e060 42%, #f0d040 55%, #f08a50 72%, #f07060 79%, #595d6a 80%); }
.dial span { font: 300 25px/30px "Open Sans", sans-serif; }
.dial small { font-size: 10px; margin-top: 9px; }
```
